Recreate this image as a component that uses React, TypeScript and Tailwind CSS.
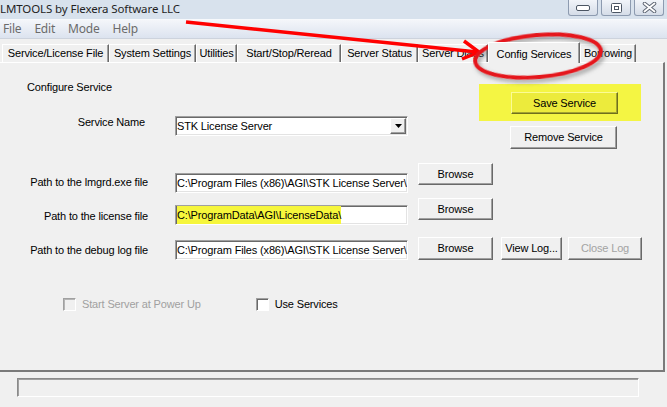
import React from 'react';

type BtnProps = { label: string; cls: string; disabled?: boolean };

const Btn = ({ label, cls, disabled }: BtnProps) => (
  <div
    className={`flex items-center justify-center border border-t-white border-l-white border-r-[#696969] border-b-[#696969] shadow-[inset_-1px_-1px_0_#a0a0a0] ${
      disabled ? 'text-[#a3a3a3]' : 'text-black'
    } ${cls}`}
  >
    {label}
  </div>
);

const sunken =
  'bg-white border border-t-[#a0a0a0] border-l-[#a0a0a0] border-r-white border-b-white shadow-[inset_1px_1px_0_#696969,inset_-1px_-1px_0_#e3e3e3]';

const Field = ({ text, hl }: { text: string; hl?: boolean }) => (
  <div className={`w-[233px] h-[20px] ${sunken} overflow-hidden whitespace-nowrap flex items-center pl-[1px]`}>
    <span className={hl ? 'bg-[#f6f63c] leading-[18px]' : ''}>{text}</span>
  </div>
);

const Check = ({ label, disabled }: { label: string; disabled?: boolean }) => (
  <div className="flex items-center gap-[6px]">
    <div
      className={`w-[13px] h-[13px] border border-t-[#a0a0a0] border-l-[#a0a0a0] border-r-white border-b-white ${
        disabled ? 'bg-[#f0f0f0] shadow-[inset_1px_1px_0_#b5b5b5]' : 'bg-white shadow-[inset_1px_1px_0_#696969]'
      }`}
    />
    <span className={disabled ? 'text-[#a0a0a0]' : 'text-black'}>{label}</span>
  </div>
);

const tabs = [
  { label: 'Service/License File', w: 'w-[107px]' },
  { label: 'System Settings', w: 'w-[87px]' },
  { label: 'Utilities', w: 'w-[41px]' },
  { label: 'Start/Stop/Reread', w: 'w-[104px]' },
  { label: 'Server Status', w: 'w-[77px]' },
  { label: 'Server Diags', w: 'w-[70px]' },
  { label: 'Config Services', w: 'w-[92px]', active: true },
  { label: 'Borrowing', w: 'w-[56px]' },
];

const CapBtn = ({ children }: { children: React.ReactNode }) => (
  <div className="w-[30px] h-[16px] rounded-b-[3px] border border-t-0 border-[#8d9bb0] bg-gradient-to-b from-[#f1f4f9] to-[#d5dde8] flex items-center justify-center">
    {children}
  </div>
);

export default function App() {
  return (
    <div className="relative w-[667px] h-[407px] overflow-hidden bg-[#f0f0f0] flex flex-col font-['Liberation_Sans',Arial,sans-serif] text-[11px] tracking-[-0.15px] text-black">
      {/* title bar */}
      <div className="h-[19px] shrink-0 bg-[#d8e2ed] flex items-start">
        <span className="font-['Noto_Sans',sans-serif] text-[11.5px] tracking-[-0.1px] leading-[18px] text-[#1f1f1f]">
          LMTOOLS by Flexera Software LLC
        </span>
        <div className="ml-auto mr-[3px] flex gap-[3px]">
          <CapBtn>
            <svg width="14" height="7" viewBox="0 0 14 7">
              <rect x="0.5" y="1.5" width="13" height="5" rx="1.5" fill="#fff" stroke="#4b5563" />
            </svg>
          </CapBtn>
          <CapBtn>
            <svg width="11" height="10" viewBox="0 0 11 10">
              <rect x="0.5" y="0.5" width="10" height="9" rx="1" fill="#fff" stroke="#4b5563" />
              <rect x="3.5" y="3.5" width="4" height="3" fill="#fff" stroke="#4b5563" />
            </svg>
          </CapBtn>
          <CapBtn>
            <svg width="15" height="11" viewBox="0 0 15 11">
              <path d="M2.5 1.5 L12.5 9.5 M12.5 1.5 L2.5 9.5" stroke="#5a6270" strokeWidth="3.6" strokeLinecap="round" />
              <path d="M2.5 1.5 L12.5 9.5 M12.5 1.5 L2.5 9.5" stroke="#fff" strokeWidth="1.8" strokeLinecap="round" />
            </svg>
          </CapBtn>
        </div>
      </div>

      {/* menu bar */}
      <div className="h-[20px] shrink-0 border-t border-[#f7f9fc] bg-gradient-to-b from-[#f4f6fa] to-[#dce3ef] border-b border-b-[#cdd3dd] flex items-center pl-[3px] gap-[13px] font-['Noto_Sans',sans-serif] text-[12px] tracking-[-0.2px] text-[#6b6b6b]">
        <span>File</span>
        <span>Edit</span>
        <span>Mode</span>
        <span>Help</span>
      </div>

      {/* tabs */}
      <div className="h-[23px] shrink-0 flex items-end pl-[2px]">
        {tabs.map((t) =>
          t.active ? (
            <div
              key={t.label}
              className={`${t.w} h-[21px] -mb-px z-10 bg-[#f0f0f0] border-l border-t border-white border-r border-r-[#696969] shadow-[inset_-1px_0_0_#a0a0a0] flex items-start justify-center pt-[3px] whitespace-nowrap`}
            >
              {t.label}
            </div>
          ) : (
            <div
              key={t.label}
              className={`${t.w} h-[18px] border-l border-t border-white border-r border-r-[#696969] shadow-[inset_-1px_0_0_#a0a0a0] flex items-center justify-center whitespace-nowrap`}
            >
              {t.label}
            </div>
          )
        )}
      </div>

      {/* panel */}
      <div className="w-[665px] h-[310px] shrink-0 border-t border-t-white border-r-2 border-r-[#7a7a7a] border-b-2 border-b-[#7a7a7a] flex flex-col">
        <div className="flex">
          <div className="w-[479px]">
            <div className="mt-[18px] pl-[27px] leading-[13px]">Configure Service</div>
            <div className="mt-[22px] flex items-start">
              <div className="w-[145px] text-right leading-[13px]">Service Name</div>
              <div className={`ml-[30px] w-[233px] h-[20px] ${sunken} flex items-center justify-between pl-[1px] pr-[1px]`}>
                <span>STK License Server</span>
                <div className="w-[16px] h-[16px] bg-[#f0f0f0] border border-t-white border-l-white border-r-[#696969] border-b-[#696969] shadow-[inset_-1px_-1px_0_#a0a0a0] flex items-center justify-center">
                  <svg width="7" height="4" viewBox="0 0 7 4">
                    <path d="M0 0 H7 L3.5 4 Z" fill="#000" />
                  </svg>
                </div>
              </div>
            </div>
          </div>
          <div className="flex flex-col">
            <div className="mt-[21px] w-[162px] h-[37px] bg-[#f4f543] pl-[32px] pt-[8px]">
              <div className="w-[107px] h-[22px] bg-[#eceb3c] border border-t-[#fbfb95] border-l-[#fbfb95] border-r-[#6f6f1c] border-b-[#6f6f1c] shadow-[inset_-1px_-1px_0_#a3a330] flex items-center justify-center">
                Save Service
              </div>
            </div>
            <Btn label="Remove Service" cls="mt-[5px] ml-[31px] w-[107px] h-[23px]" />
          </div>
        </div>

        {/* path rows */}
        <div className="mt-[14px] flex items-start">
          <div className="mt-[13px] w-[148px] text-right leading-[13px]">Path to the lmgrd.exe file</div>
          <div className="ml-[27px] mt-[10px]">
            <Field text={'C:\\Program Files (x86)\\AGI\\STK License Server\\'} />
          </div>
          <Btn label="Browse" cls="ml-[10px] w-[75px] h-[22px]" />
        </div>

        <div className="mt-[5px] flex items-start">
          <div className="mt-[12px] w-[148px] text-right leading-[13px]">Path to the license file</div>
          <div className="ml-[27px] mt-[7px]">
            <Field text={'C:\\ProgramData\\AGI\\LicenseData\\'} hl />
          </div>
          <Btn label="Browse" cls="ml-[10px] w-[75px] h-[22px]" />
        </div>

        <div className="mt-[12px] flex items-start">
          <div className="mt-[7px] w-[148px] text-right leading-[13px]">Path to the debug log file</div>
          <div className="ml-[27px] mt-[3px]">
            <Field text={'C:\\Program Files (x86)\\AGI\\STK License Server\\'} />
          </div>
          <Btn label="Browse" cls="ml-[10px] w-[75px] h-[23px]" />
          <Btn label="View Log..." cls="ml-[8px] w-[61px] h-[23px]" />
          <Btn label="Close Log" cls="ml-[6px] w-[74px] h-[23px]" disabled />
        </div>

        <div className="mt-[38px] flex items-center leading-[13px]">
          <div className="ml-[63px]">
            <Check label="Start Server at Power Up" disabled />
          </div>
          <div className="ml-[55px]">
            <Check label="Use Services" />
          </div>
        </div>
      </div>

      {/* status bar */}
      <div className="mt-[6px] ml-[17px] w-[622px] h-[19px] border border-t-[#8a8a8a] border-l-[#8a8a8a] border-r-white border-b-white shadow-[inset_1px_1px_0_#a0a0a0]" />

      {/* annotations */}
      <svg className="absolute left-0 top-0 pointer-events-none" width="667" height="407" viewBox="0 0 667 407">
        <defs>
          <filter id="sh" x="-20%" y="-40%" width="140%" height="180%">
            <feDropShadow dx="2" dy="3" stdDeviation="2" floodColor="#555" floodOpacity="0.55" />
          </filter>
        </defs>
        <path d="M186 22 L477 52" stroke="#ff0000" strokeWidth="3.5" fill="none" />
        <path d="M464 41 L479 52 L462 59" stroke="#ff0000" strokeWidth="3.5" fill="none" strokeLinejoin="miter" />
        <ellipse
          cx="538"
          cy="56"
          rx="63"
          ry="21"
          transform="rotate(-5 538 56)"
          stroke="#e5141b"
          strokeWidth="4"
          fill="none"
          filter="url(#sh)"
        />
      </svg>
    </div>
  );
}
